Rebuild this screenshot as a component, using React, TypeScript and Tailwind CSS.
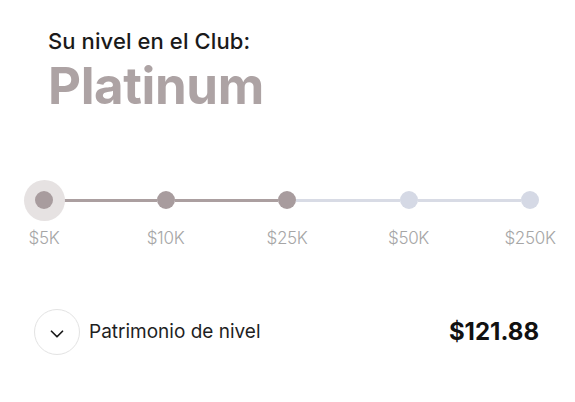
import React from "react";
import { ChevronDown } from "lucide-react";

const steps = [
  { label: "$5K", active: true },
  { label: "$10K", active: true },
  { label: "$25K", active: true },
  { label: "$50K", active: false },
  { label: "$250K", active: false },
];

export default function App() {
  return (
    <div
      className="w-[575px] h-[402px] bg-white overflow-hidden"
      style={{ fontFamily: "Inter, 'Noto Sans', sans-serif" }}
    >
      <div className="pt-[28px] pl-[48px]">
        <div className="text-[22px] leading-[26px] font-medium text-[#1a1a1a] tracking-[0.1px]">
          Su nivel en el Club:
        </div>
        <div className="mt-[6px] text-[51px] leading-[51px] font-bold text-[#ada3a4] tracking-[-0.4px]">
          Platinum
        </div>
      </div>

      <div className="mt-[80px] pl-[35px] pr-[36px] flex">
        {steps.map((s, i) => (
          <React.Fragment key={s.label}>
            {i > 0 && (
              <div
                className={`flex-1 h-[3px] mt-[7.5px] ${
                  s.active ? "bg-[#ab9fa0]" : "bg-[#d8dbe5]"
                }`}
              />
            )}
            <div className="w-[18px] flex flex-col items-center">
              <div className="relative w-[18px] h-[18px]">
                {i === 0 && (
                  <div className="absolute left-[-11.5px] top-[-11.5px] w-[41px] h-[41px] rounded-full bg-[#e6e2e2]" />
                )}
                <div
                  className={`relative w-[18px] h-[18px] rounded-full ${
                    s.active ? "bg-[#a89c9e]" : "bg-[#d5d9e5]"
                  }`}
                />
              </div>
              <div className="mt-[18px] text-[17px] leading-[22px] font-light text-[#a6a6a6] whitespace-nowrap tracking-[-0.3px]">
                {s.label}
              </div>
            </div>
          </React.Fragment>
        ))}
      </div>

      <div className="mt-[60px] pl-[34px] pr-[36px] flex items-center">
        <div className="w-[46px] h-[46px] rounded-full border border-[#e3e3e3] flex items-center justify-center">
          <ChevronDown size={22} strokeWidth={1.9} className="text-[#1a1a1a] mt-[3px]" />
        </div>
        <div className="ml-[9px] text-[19px] leading-[24px] text-[#1f1f1f]">
          Patrimonio de nivel
        </div>
        <div className="ml-auto text-[24px] leading-[28px] font-bold text-[#111111]">
          $121.88
        </div>
      </div>
    </div>
  );
}
